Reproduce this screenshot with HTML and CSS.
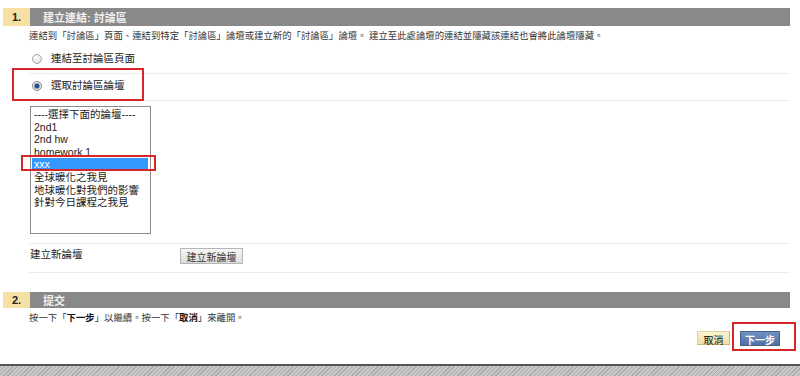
FILE: index.html
```html
<!DOCTYPE html>
<html lang="zh-Hant">
<head>
  <meta charset="UTF-8" />
  <title>建立連結: 討論區</title>
  <link rel="stylesheet" href="styles.css">
</head>
<body>
  <div class="page">
    <main class="content">

      <!-- Step 1 -->
      <div class="step">
        <span class="step-num">1.</span>
        <h2 class="step-title">建立連結: 討論區</h2>
      </div>
      <div class="step-body">
        <p class="hint">連結到「討論區」頁面、連結到特定「討論區」論壇或建立新的「討論區」論壇。 建立至此處論壇的連結並隱藏該連結也會將此論壇隱藏。</p>

        <label class="option"><span class="radio"></span>連結至討論區頁面</label>
        <label class="option">
          <span class="radio checked"></span>選取討論區論壇
          <span class="mark mark-option"></span>
        </label>

        <div class="forum-pick">
          <ul class="listbox">
            <li>----選擇下面的論壇----</li>
            <li>2nd1</li>
            <li>2nd hw</li>
            <li>homework 1</li>
            <li class="selected">xxx<span class="mark mark-item"></span></li>
            <li>全球暖化之我見</li>
            <li>地球暖化對我們的影響</li>
            <li>針對今日課程之我見</li>
          </ul>
        </div>

        <div class="field-row">
          <span class="field-label">建立新論壇</span>
          <button class="btn-plain" type="button">建立新論壇</button>
        </div>
      </div>

      <!-- Step 2 -->
      <div class="step step-2">
        <span class="step-num">2.</span>
        <h2 class="step-title">提交</h2>
      </div>
      <div class="step-body">
        <p class="hint">按一下「<b>下一步</b>」以繼續。按一下「<b>取消</b>」來離開。</p>
        <div class="actions">
          <button class="btn-cancel" type="button">取消</button>
          <button class="btn-next" type="button">下一步<span class="mark mark-next"></span></button>
        </div>
      </div>

    </main>
    <footer class="band"></footer>
  </div>
</body>
</html>
```

FILE: styles.css
```css
body { margin: 0; font-family: "Liberation Sans", "Noto Sans CJK TC", sans-serif; font-size: 10px; color: #222; background: #fff; }
.page { height: 376px; display: flex; flex-direction: column; }
.content { flex: 1; padding: 8px 10px 0 3px; }

/* step headers */
.step { display: flex; height: 18px; }
.step-2 { margin-top: 19px; height: 16px; }
.step-num { width: 27px; background: #f6e0a4; color: #222; font-size: 11px; font-weight: bold; display: flex; align-items: center; justify-content: center; }
.step-title { flex: 1; margin: 0; padding-left: 13px; background: #898989; color: #f2f2f2; font-size: 11px; font-weight: bold; display: flex; align-items: center; }

.step-body { padding-left: 26px; }
.hint { margin: 4px 0 5px; line-height: 12px; font-size: 9.4px; color: #333; }
.hint b { color: #111; }

/* radio rows */
.option { position: relative; display: flex; align-items: flex-start; gap: 9px; height: 21px; padding: 5px 0 0 3px; border-bottom: 1px solid #ececec; font-size: 10.5px; line-height: 12px; }
.radio { width: 8px; height: 8px; margin-top: 2px; border: 1px solid #a9a9a9; border-radius: 50%; background: radial-gradient(circle at 40% 35%, #fff, #d8d8d8); }
.radio.checked { background: radial-gradient(circle, #1f4f86 0 2px, #7f9cc0 2.5px, #e6e6e6 3.5px); border-color: #8a8a8a; }

/* list box */
.forum-pick { padding: 5px 0 9px 1px; border-bottom: 1px solid #ececec; }
.listbox { list-style: none; margin: 0; padding: 1px 1px 0; width: 117px; height: 125px; border: 1px solid #8c8c8c; font-size: 10.5px; line-height: 12.6px; }
.listbox li { position: relative; padding-left: 2px; white-space: nowrap; }
.listbox li.selected { background: #3399ff; color: #fff; margin-right: 1px; }

/* create forum row */
.field-row { display: flex; align-items: flex-start; height: 24px; padding: 4px 0 0 1px; border-bottom: 1px solid #ececec; }
.field-label { width: 150px; line-height: 12px; font-size: 10.5px; }
.btn-plain { width: 63px; height: 16px; padding: 0; border: 1px solid #b5b5b5; background: linear-gradient(#f6f6f6, #dcdcdc); font: inherit; font-size: 10px; color: #333; }

/* submit buttons */
.actions { display: flex; justify-content: flex-end; gap: 10px; margin-top: 7px; padding-right: 10px; }
.btn-cancel { width: 33px; height: 14px; padding: 0; border: 1px solid #e0d3a0; border-right-color: #c8b77a; border-bottom-color: #c8b77a; background: linear-gradient(#fbf3d2, #efe0a6); font: inherit; font-size: 10px; color: #111; }
.btn-next { position: relative; width: 40px; height: 15px; padding: 0; border: 1px solid #46618d; background: linear-gradient(#7190c2, #5272a6); font: inherit; font-size: 10px; font-weight: bold; color: #fff; }

/* red annotation boxes */
.mark { position: absolute; border: 2px solid #d6262c; pointer-events: none; }
.mark-option { left: -17px; top: -6px; width: 128px; height: 29px; }
.mark-item { left: -11px; top: -3px; width: 131px; height: 12px; }
.mark-next { left: -9px; top: -10px; width: 60px; height: 25px; }

.band { height: 10px; border-top: 2px solid #555; background: repeating-linear-gradient(135deg, #aaa 0 1px, #c8c8c8 1px 3px); }
```
